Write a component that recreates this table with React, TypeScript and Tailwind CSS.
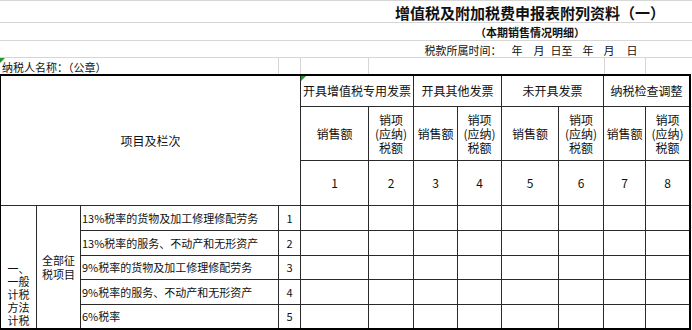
import type { ReactNode } from "react";

const GROUPS = ["开具增值税专用发票", "开具其他发票", "未开具发票", "纳税检查调整"];

const ITEMS = [
  "13%税率的货物及加工修理修配劳务",
  "13%税率的服务、不动产和无形资产",
  "9%税率的货物及加工修理修配劳务",
  "9%税率的服务、不动产和无形资产",
  "6%税率",
];

function Cell({ className = "", children }: { className?: string; children?: ReactNode }) {
  return <div className={`bg-white flex items-center justify-center ${className}`}>{children}</div>;
}

function Flag() {
  return (
    <span className="absolute left-0 top-0 w-0 h-0 border-t-[5px] border-r-[5px] border-t-[#1f9a2a] border-r-transparent" />
  );
}

function SheetHeader() {
  return (
    <div className="border-t border-[#d6d6d6]">
      <div className="h-[22px] flex border-b border-[#d6d6d6]">
        <div className="w-[368px]" />
        <div className="flex-1 flex items-center justify-center text-[15px] font-bold leading-none pt-[2px]">
          增值税及附加税费申报表附列资料（一）
        </div>
      </div>
      <div className="h-[18px] flex border-b border-[#d6d6d6]">
        <div className="w-[368px]" />
        <div className="flex-1 flex items-end justify-center text-[11px] font-bold leading-none pb-[2px]">
          （本期销售情况明细）
        </div>
      </div>
      <div className="h-[17px] flex border-b border-[#d6d6d6]">
        <div className="w-[368px]" />
        <div className="flex-1 flex items-end justify-center text-[11px] leading-none pb-[1px] pl-[2px]">
          <span>税款所属时间：</span>
          <span className="ml-[10px]">年</span>
          <span className="ml-[11px]">月</span>
          <span className="ml-[6px]">日至</span>
          <span className="ml-[10px]">年</span>
          <span className="ml-[10px]">月</span>
          <span className="ml-[12px]">日</span>
        </div>
      </div>
      <div className="h-[16px] flex">
        <div className="relative w-[279px] border-r border-[#d6d6d6] flex items-end text-[11px] leading-none pl-[2px] pb-[1px]">
          <Flag />
          纳税人名称：（公章）
        </div>
        <div className="w-[22px] border-r border-[#d6d6d6]" />
        <div className="w-[68px] border-r border-[#d6d6d6]" />
        <div className="w-[236px] border-r border-[#d6d6d6]" />
        <div className="w-[41px] border-r border-[#d6d6d6]" />
        <div className="flex-1" />
      </div>
    </div>
  );
}

export default function App() {
  return (
    <div className="w-[692px] h-[330px] overflow-hidden bg-white text-[#111] font-['Noto_Sans_CJK_SC','Liberation_Sans',sans-serif]">
      <SheetHeader />
      <div className="w-[691px] grid gap-px bg-[#2a2a2a] border-t-2 border-r-2 border-b-2 border-l border-black grid-cols-[35px_43px_197px_21px_67px_44px_43px_43px_56px_44px_41px_43px] grid-rows-[30px_53px_44px_24px_24px_23px_24px_23px]">
        <Cell className="col-span-4 row-span-3 text-[12px]">项目及栏次</Cell>
        {GROUPS.map((g, i) => (
          <Cell key={g} className="relative col-span-2 text-[12px] leading-none">
            {i === 0 && <Flag />}
            {g}
          </Cell>
        ))}
        {GROUPS.map((g) => [
          <Cell key={`${g}-a`} className="text-[12px] leading-none">
            销售额
          </Cell>,
          <Cell key={`${g}-b`} className="flex-col text-[12px] leading-[14px]">
            <span>销项</span>
            <span>(应纳)</span>
            <span>税额</span>
          </Cell>,
        ])}
        {[1, 2, 3, 4, 5, 6, 7, 8].map((n) => (
          <Cell key={n} className="text-[12px] leading-none">
            {n}
          </Cell>
        ))}

        <Cell className="row-span-5 flex-col justify-end items-center text-[11px] leading-[13px] pb-[1px]">
          <span>一、</span>
          <span>一般</span>
          <span>计税</span>
          <span>方法</span>
          <span>计税</span>
        </Cell>
        <Cell className="row-span-5 flex-col text-[11px] leading-[14px]">
          <span>全部征</span>
          <span>税项目</span>
        </Cell>
        {ITEMS.map((item, i) => [
          <Cell key={`${i}-t`} className="col-start-3 justify-start text-[11px] leading-none pl-[1px]">
            {item}
          </Cell>,
          <Cell key={`${i}-n`} className="text-[11px] leading-none">
            {i + 1}
          </Cell>,
          ...[0, 1, 2, 3, 4, 5, 6, 7].map((c) => <Cell key={`${i}-${c}`} />),
        ])}
      </div>
    </div>
  );
}
